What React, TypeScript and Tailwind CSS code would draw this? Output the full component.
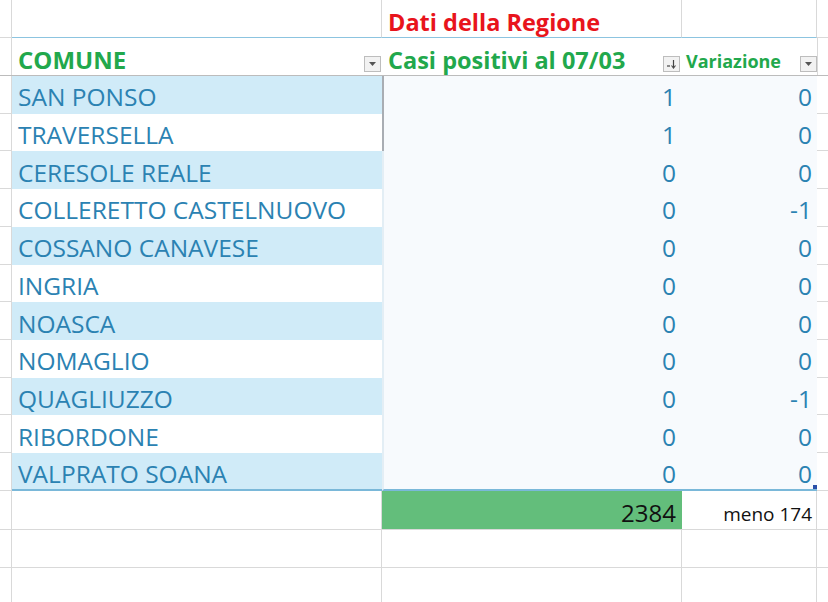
import React from "react";

const rows = [
  { name: "SAN PONSO", casi: 1, varz: 0 },
  { name: "TRAVERSELLA", casi: 1, varz: 0 },
  { name: "CERESOLE REALE", casi: 0, varz: 0 },
  { name: "COLLERETTO CASTELNUOVO", casi: 0, varz: -1 },
  { name: "COSSANO CANAVESE", casi: 0, varz: 0 },
  { name: "INGRIA", casi: 0, varz: 0 },
  { name: "NOASCA", casi: 0, varz: 0 },
  { name: "NOMAGLIO", casi: 0, varz: 0 },
  { name: "QUAGLIUZZO", casi: 0, varz: -1 },
  { name: "RIBORDONE", casi: 0, varz: 0 },
  { name: "VALPRATO SOANA", casi: 0, varz: 0 },
];

const cols = "grid grid-cols-[12px_370px_300px_135px_11px]";

function FilterButton() {
  return (
    <div className="flex h-[16px] w-[17px] items-center justify-center border border-[#bdbdbd] bg-[#f2f2f2]">
      <svg width="7" height="4" viewBox="0 0 7 4">
        <path d="M0 0h7L3.5 4z" fill="#555" />
      </svg>
    </div>
  );
}

function SortButton() {
  return (
    <div className="flex h-[16px] w-[17px] items-center justify-center border border-[#bdbdbd] bg-[#f2f2f2]">
      <svg width="11" height="10" viewBox="0 0 11 10">
        <path d="M1 7h3" stroke="#444" strokeWidth="1.2" />
        <path d="M7.5 1v7" stroke="#444" strokeWidth="1.2" />
        <path d="M5.5 6.5l2 2.5 2-2.5" stroke="#444" strokeWidth="1.1" fill="none" />
      </svg>
    </div>
  );
}

export default function App() {
  return (
    <div className="h-[602px] w-[828px] overflow-hidden bg-white font-['Open_Sans',sans-serif]">
      {/* Row 1 */}
      <div className={`${cols} h-[38px]`}>
        <div className="border-r border-b border-[#d9d9d9]" />
        <div className="border-r border-b border-r-[#d9d9d9] border-b-[#8cc4e0]" />
        <div className="flex items-end border-r border-b border-r-[#d9d9d9] border-b-[#8cc4e0] pb-[3px] pl-[6px] text-[23.5px] leading-none font-bold text-[#e8141c]">
          Dati della Regione
        </div>
        <div className="border-r border-b border-r-[#d9d9d9] border-b-[#8cc4e0]" />
        <div className="border-b border-[#d9d9d9]" />
      </div>

      {/* Header */}
      <div className={`${cols} h-[38px] border-b border-[#bcbcbc]`}>
        <div className="border-r border-[#d9d9d9]" />
        <div className="flex items-end justify-between pr-[1px] pb-[3px]">
          <span className="pl-[6px] text-[24px] leading-none font-bold text-[#22a84c]">
            COMUNE
          </span>
          <FilterButton />
        </div>
        <div className="flex items-end justify-between pr-[2px] pb-[3px]">
          <span className="pl-[6px] text-[23.5px] leading-none font-bold text-[#22a84c]">
            Casi positivi al 07/03
          </span>
          <SortButton />
        </div>
        <div className="flex items-end justify-between pb-[3px]">
          <span className="mb-[2px] pl-[4px] text-[18px] leading-none font-bold text-[#22a84c]">
            Variazione
          </span>
          <FilterButton />
        </div>
        <div className="border-l border-[#d9d9d9]" />
      </div>

      {/* Data rows */}
      {rows.map((r, i) => {
        const last = i === rows.length - 1;
        const pad = last ? "pb-[2px]" : "pb-[4px]";
        return (
          <div key={r.name} className={`${cols} h-[37.73px]`}>
            <div className="border-r border-b border-[#d9d9d9]" />
            <div
              className={`flex items-end ${pad} pl-[6px] text-[24.5px] leading-none text-[#2b82b2] ${
                i % 2 === 0 ? "bg-[#d0ebf8]" : "bg-white"
              } ${last ? "border-b-2 border-[#7ab8d9]" : ""}`}
            >
              {r.name}
            </div>
            <div
              className={`flex items-end justify-end bg-[#f7fafd] pr-[6px] ${pad} text-[24.5px] leading-none text-[#2b82b2] ${
                i < 2 ? "border-l-2 border-l-[#a9adb3]" : "border-l-2 border-l-[#e3eef5]"
              } ${last ? "border-b-2 border-b-[#7ab8d9]" : ""}`}
            >
              {r.casi}
            </div>
            <div
              className={`relative flex items-end justify-end bg-[#f7fafd] pr-[5px] ${pad} text-[24.5px] leading-none text-[#2b82b2] ${
                last ? "border-b-2 border-b-[#7ab8d9]" : ""
              }`}
            >
              {r.varz}
              {last && (
                <div className="absolute right-0 bottom-0 h-[4px] w-[4px] bg-[#2a4fa8]" />
              )}
            </div>
            <div className="border-b border-[#d9d9d9]" />
          </div>
        );
      })}

      {/* Total row */}
      <div className={`${cols} h-[39px]`}>
        <div className="border-r border-b border-[#d9d9d9]" />
        <div className="border-r border-b border-[#d9d9d9]" />
        <div className="flex items-end justify-end border-b border-[#d9d9d9] bg-[#63be7b] pr-[6px] pb-[4px] text-[24px] leading-none text-[#111]">
          2384
        </div>
        <div className="flex items-end justify-end border-r border-b border-[#d9d9d9] pr-[4px] pb-[5px] text-[19px] leading-none text-[#111]">
          meno 174
        </div>
        <div className="border-b border-[#d9d9d9]" />
      </div>

      {/* Empty rows */}
      {[0, 1].map((k) => (
        <div key={k} className={`${cols} h-[38px]`}>
          <div className="border-r border-b border-[#d9d9d9]" />
          <div className="border-r border-b border-[#d9d9d9]" />
          <div className="border-r border-b border-[#d9d9d9]" />
          <div className="border-r border-b border-[#d9d9d9]" />
          <div className="border-b border-[#d9d9d9]" />
        </div>
      ))}
    </div>
  );
}
